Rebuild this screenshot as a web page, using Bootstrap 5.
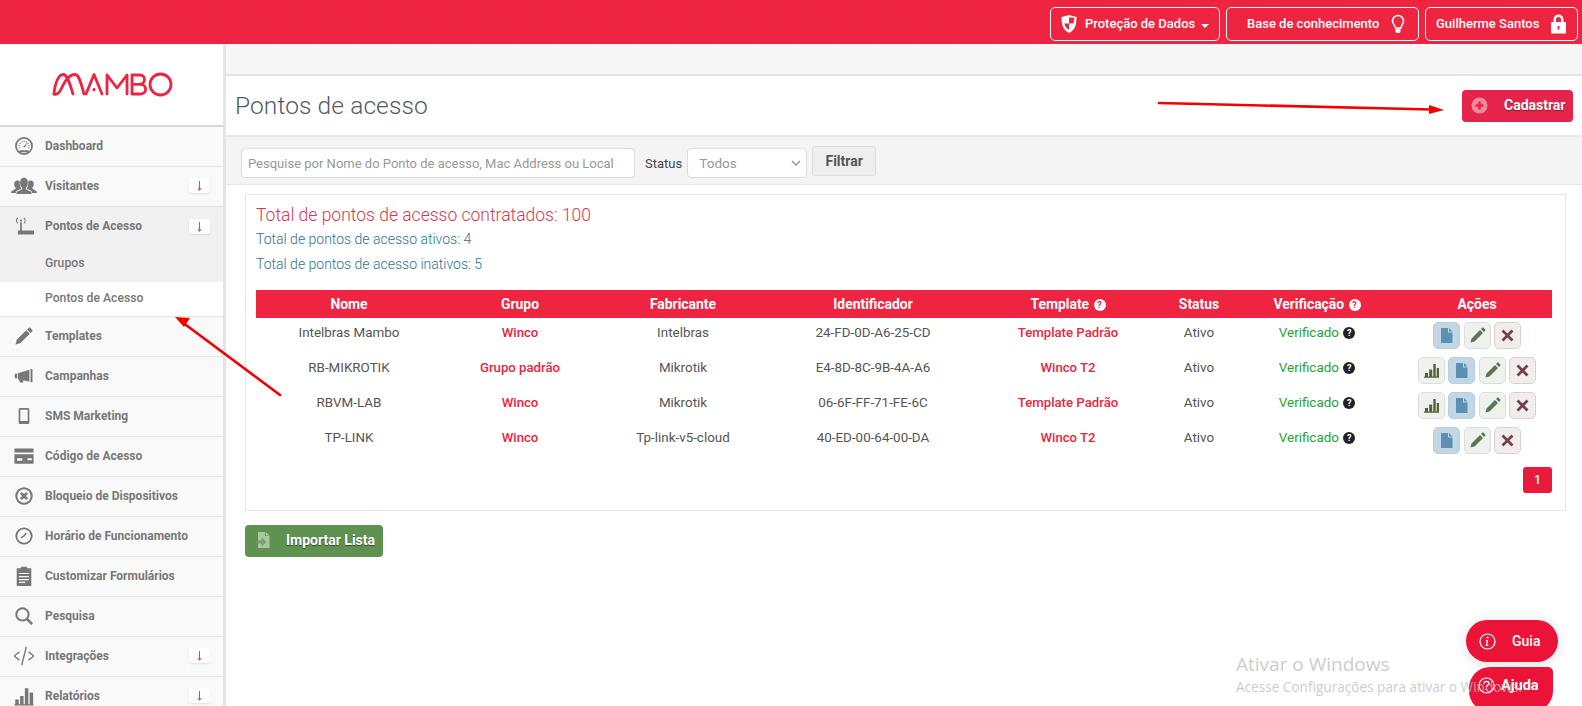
<!DOCTYPE html>
<html lang="pt-BR">
<head>
<meta charset="utf-8">
<title>Pontos de acesso</title>
<link href="https://cdn.jsdelivr.net/npm/bootstrap@5.3.0/dist/css/bootstrap.min.css" rel="stylesheet">
<style>
html,body{height:706px;overflow:hidden}
body{font-family:Roboto,"Liberation Sans",sans-serif;font-size:13px;color:#555;background:#fff;position:relative}
.topbar{height:44px;background-color:#ee2440;background-image:linear-gradient(rgba(0,0,0,.012) 1px,transparent 1px),linear-gradient(90deg,rgba(0,0,0,.012) 1px,transparent 1px);background-size:10px 10px;padding:4px 4px 0 0;gap:6px;justify-content:flex-end}
.topbtn{height:34px;border:1px solid #fff;border-radius:5px;color:#fff;font-weight:500;font-size:13px;display:flex;align-items:center;padding:0;background:transparent}
.topbtn:hover{color:#fff}
.tb1{width:170px;padding-left:10px;gap:8px}
.tb2{width:193px;padding-left:20px;gap:12px}
.tb3{width:153px;padding-left:10px;gap:11px}
.caretdown{width:0;height:0;border:4px solid transparent;border-top-color:#fff;border-bottom:0;margin-left:-2px;margin-top:3px}
.layout{height:662px}
.sidebar{width:226px;flex:none;border-right:3px solid #e4e4e4;background:#fafafa;overflow:hidden}
.logobox{height:83px;background:#fff;border-bottom:2px solid #d8d8d8;padding:21px 0 0 45px}
.logobox svg{display:block}
.menu{border-radius:0}
.menu .list-group-item{height:40px;border:0;border-bottom:1px solid #e3e3e3;border-radius:0;background:#f9f9f9;padding:0 0 2px;display:flex;align-items:center;color:#777;font-weight:700;font-size:12px}
.menu .list-group-item.is-open{background:#f1f1f1;border-bottom:0;padding-bottom:2px}
.menu .list-group-item.subitem{height:35px;background:#f1f1f1;border-bottom:0;padding:0 0 2px 45px;font-weight:500;font-size:12.2px}
.menu .list-group-item.subitem.is-current{background:#fff;border-bottom:1px solid #e3e3e3}
.micon{width:45px;flex:none;display:flex;justify-content:center;padding-left:3px}
.micon svg{width:20px;height:20px}
.micon svg.wide{width:26px;height:26px}
.expander{margin-left:auto;margin-right:13px;width:21px;height:15px;background:#fff;border-radius:3px;box-shadow:0 1px 2px rgba(0,0,0,.1);display:flex;align-items:center;justify-content:center}
.expander svg{width:7px;height:11px;stroke:#f0405f;fill:none}
.mainpane{flex:1;min-width:0}
.stripe{height:32px;background:#f6f6f6;border-bottom:2px solid #e3e3e3}
.titlebar{height:61px;padding:0 9px 0 9px;border-bottom:2px solid #e9e9e9;background:#fff}
.pagetitle{font-size:24.5px;font-weight:300;color:#4f5b66;margin:0;letter-spacing:.1px}
.btn-cad{width:111px;height:32px;margin-top:0;background:#e4244a;border:0;border-radius:4px;color:#fff;font-weight:700;font-size:14px;display:flex;align-items:center;padding:0 0 0 9px;gap:16px;text-shadow:0 1px 1px rgba(0,0,0,.4)}
.btn-cad:hover{color:#fff;background:#e4244a}
.btn-cad svg{width:17px;height:17px}
.filterbar{height:48px;background:#f4f4f4;border-bottom:1px solid #e6e6e6;padding:11px 15px 0;gap:0;align-items:flex-start}
.filterbar .form-control{width:394px;height:30px;font-size:13px;padding:0 6px;border-color:#ddd;border-radius:4px;color:#999}
.filterbar .form-control::placeholder{color:#999}
.statuslbl{margin:6px 5px 0 10px;color:#444;font-size:13px}
.filterbar .form-select{width:120px;height:30px;font-size:13.6px;padding:1px 0 0 11px;border-color:#ddd;color:#999;border-radius:4px;background-image:url("data:image/svg+xml,%3Csvg xmlns='http://www.w3.org/2000/svg' viewBox='0 0 10 6'%3E%3Cpath d='M1 1l4 4 4-4' fill='none' stroke='%23999' stroke-width='1.500'/%3E%3C/svg%3E");background-size:10px 6px;background-position:right 5px center}
.btn-fil{width:64px;height:30px;margin:-2px 0 0 5px;padding:0;background:#eee;border:1px solid #ddd;color:#555;font-weight:700;font-size:14px;border-radius:3px}
.panelbox{margin:9px 16px 0 19px;height:317px;border:1px solid #e6e6e6;padding:9px 9px 10px 10px}
.stat-a{font-size:17.5px;font-weight:300;color:#d6394f;line-height:22px;margin:0 0 1px}
.stat-b{font-size:14px;font-weight:300;color:#2c7396;line-height:25px;margin:0}
.tbl{margin:13px 0 0;table-layout:fixed;width:1296px;--bs-table-bg:transparent;border-collapse:collapse}
.tbl th{height:28px;background:#ee2440;color:#fff;font-weight:700;font-size:13.9px;text-align:center;padding:0;border:0;vertical-align:middle}
.tbl td{height:35px;padding:3px 0 0;border:0;text-align:center;vertical-align:top;color:#555;font-size:13.4px;line-height:23px}
.tbl td.acts{padding:4px 0 0 8px;line-height:1}
.tbl a{color:#ee2440;font-weight:500;text-decoration:none;font-size:13.2px}
.tbl .okay{color:#1fa32f}
.qm{display:inline-block;width:12px;height:12px;border-radius:50%;background:#222;color:#fff;font-size:9px;font-weight:700;line-height:12px;text-align:center;vertical-align:1px;margin-left:1px}
th .qm{background:#fff;color:#ee2440}
.actrow{display:inline-flex;gap:3.5px;justify-content:center;vertical-align:top}
.actbtn{width:27px;height:27px;border-radius:5px;border:1px solid #dcdedc;background:#eff1ef;padding:0;display:flex;align-items:center;justify-content:center}
.actbtn svg{width:17px;height:17px}
.actbtn.bfile{background:#c3d6e3;border-color:#b6cedd}
.actbtn.bdel{background:#f1eded;border-color:#dfcfd2}
.pagewrap{margin:9px 0 0}
.pagewrap .pagination{margin:0;justify-content:flex-end}
.pagewrap .page-link{width:29px;height:26px;padding:0;line-height:26px;text-align:center;background:#e81b3c;border:0;border-radius:3px!important;color:#fff;font-size:12.5px;font-weight:500}
.btn-imp{width:138px;height:32px;margin:14px 0 0 19px;background:#5f9150;border:0;border-radius:4px;color:#fff;font-weight:700;font-size:14px;padding:0 0 2px 11px;display:flex;align-items:center;gap:15px;text-shadow:0 1px 1px rgba(0,0,0,.5)}
.btn-imp:hover{color:#fff;background:#5f9150}
.btn-imp svg{width:15px;height:18px}
.arrowlayer{position:absolute;left:0;top:0;pointer-events:none}
.watermark{position:absolute;left:1236px;top:651px;color:rgba(190,190,190,.8);font-family:"Open Sans",sans-serif;pointer-events:none}
.wm1{font-size:19px;line-height:26px}
.wm2{font-size:13.6px;line-height:20px;white-space:nowrap}
.floatbtn{position:absolute;background:#eb1337;color:#fff;font-weight:500;border:0;display:flex;align-items:center;padding:0}
.floatbtn svg{width:17px;height:17px}
.fguia{left:1466px;top:620px;width:92px;height:42px;border-radius:21px;box-shadow:0 2px 14px rgba(0,0,0,.14);padding-left:13px;gap:16px;font-size:14px}
.fajuda{left:1469px;top:667px;width:84px;height:45px;border-radius:21px 5px 21px 21px;padding:0 0 8px 9px;gap:6px;font-size:14.5px;font-weight:700}
</style>
</head>
<body>
<svg width="0" height="0" class="position-absolute">
<defs>
<symbol id="i-gauge" viewBox="0 0 26 26"><circle cx="13" cy="13" r="10.500" fill="none" stroke="#777" stroke-width="2.200"/><path d="M7 16a6.500 6.500 0 1 1 12 0" fill="none" stroke="#777" stroke-width="1.400" stroke-dasharray="1.500 1.500"/><path d="M12 14l6-6-4 7zM7 18.500h12v2.500H7z" fill="#777"/></symbol>
<symbol id="i-users" viewBox="-1 -1 28 28"><path d="M13 4c3.200 0 4.200 2.500 4.200 5.500s-1 4.500-2.200 5.500v1.500l5 2.300c1 .5 1.200 1.700 1.200 2.700H4.800c0-1 .2-2.200 1.200-2.700l5-2.300V15c-1.200-1-2.200-2.500-2.200-5.500S9.800 4 13 4z" fill="#777"/><path d="M6 7c1.500 0 2 .6 2.500 1.400-.4 3 .3 5.400 1.500 7v.6l-4.500 2.100c-.8.500-1.300 1.500-1.300 2.400H-1c0-1 .3-2 1.200-2.500l3.800-2v-1.300C3 13.700 2.400 12.500 2.400 11 2.400 8.500 3.500 7 6 7zM20 7c-1.500 0-2 .6-2.500 1.400.4 3-.3 5.400-1.500 7v.6l4.500 2.100c.8.500 1.300 1.500 1.300 2.400H27c0-1-.3-2-1.200-2.500l-3.800-2v-1.300c1-.8 1.600-2 1.600-3.500C23.600 8.500 22.500 7 20 7z" fill="#777"/></symbol>
<symbol id="i-router" viewBox="0 0 26 26"><path d="M5 19h21v5H5zM8 8h2.200v12H8z" fill="#777"/><circle cx="9" cy="6" r="1.400" fill="#777"/><path d="M5 2.500c-2 2-2 5 0 7M13 2.500c2 2 2 5 0 7" fill="none" stroke="#777" stroke-width="1.400"/></symbol>
<symbol id="i-pencil" viewBox="0 0 26 26"><path d="M2 24l1.500-6L16 5.500 20.500 10 8 22.500zM17 4.500l2-2c.7-.7 1.500-.7 2.200 0l2.300 2.300c.7.700.7 1.500 0 2.200l-2 2z" fill="#777"/></symbol>
<symbol id="i-horn" viewBox="0 0 26 26"><path d="M1 10h3v6H1zM5 9.500L20 5v15.500L12 18.500v3H7.500l-1-4H5z" fill="#777"/><path d="M21.500 4h2.500v17h-2.500z" fill="#777"/></symbol>
<symbol id="i-phone" viewBox="0 0 26 26"><path fill-rule="evenodd" d="M8.500 2.500h9c1.500 0 2.500.8 2.500 2.200v16.600c0 1.400-1 2.200-2.500 2.200h-9c-1.500 0-2.500-.8-2.500-2.200V4.700c0-1.400 1-2.200 2.500-2.200zm-.3 2.500v14.500h9.600V5z" fill="#777"/></symbol>
<symbol id="i-card" viewBox="1.500 1.500 23 23"><path fill-rule="evenodd" d="M2 4.500h22V9H2zM2 11h22v11H2zm3 4.500v3h6v-3zm12 0V18h5v-2.500z" fill="#777"/></symbol>
<symbol id="i-xcirc" viewBox="0 0 26 26"><circle cx="13" cy="13" r="10" fill="none" stroke="#777" stroke-width="2.600"/><path d="M9 9l8 8M17 9l-8 8" stroke="#777" stroke-width="3.400"/></symbol>
<symbol id="i-clock" viewBox="0 0 26 26"><circle cx="13" cy="13" r="10" fill="none" stroke="#777" stroke-width="2.400"/><path d="M9 15.500l4-2.500 3-4" fill="none" stroke="#777" stroke-width="2"/></symbol>
<symbol id="i-clip" viewBox="0 0 26 26"><path fill-rule="evenodd" d="M4.500 3H9V1h8v2h4.500c.7 0 1 .3 1 1v21c0 .7-.3 1-1 1h-17c-.7 0-1-.3-1-1V4c0-.7.3-1 1-1zm2 6v1.500h13V9zm0 4v1.500h13V13zm0 4v1.500h13V17zm0 3.500V22h8v-1.500z" fill="#777"/></symbol>
<symbol id="i-search" viewBox="0 0 26 26"><circle cx="11" cy="11" r="8" fill="none" stroke="#777" stroke-width="2.600"/><path d="M16.500 16.500l7 7" stroke="#777" stroke-width="3.400"/></symbol>
<symbol id="i-code" viewBox="2 2 22 22"><path d="M8 8.500l-6 4.500 6 4.500M18 8.500l6 4.500-6 4.500M15.500 3l-5 20" fill="none" stroke="#777" stroke-width="1.500"/></symbol>
<symbol id="i-bars" viewBox="1.500 1.500 23 23"><path d="M2 22.500h22V24H2zM3 17h4v5.500H3zM8.500 13h4v9.500h-4zM14 4h4v18.500h-4zM19.500 9h4v13.500h-4z" fill="#777"/></symbol>
<symbol id="a-chart" viewBox="0 0 17 17"><path d="M1 14.500h15v1.200H1zM2 11h3v3.500H2zM6.200 7.500h3v7h-3zM10.300 2h2.400v12.500h-2.400zM13.700 6h2.300v8.500h-2.300z" fill="#54613f"/></symbol>
<symbol id="a-file" viewBox="0 0 17 17"><path d="M3 1h7v4.500h4.500V16H3zM11 1l3.500 3.500H11z" fill="#5b90b5"/></symbol>
<symbol id="a-pen" viewBox="0 0 17 17"><path d="M1.500 15.500l1-4L11 3l3 3-8.500 8.500zM12 2l1.200-1.200c.4-.4 1-.4 1.400 0l1.600 1.600c.4.400.4 1 0 1.400L15 5z" fill="#5c7553"/></symbol>
<symbol id="a-del" viewBox="0 0 17 17"><path d="M3.500 3.500l10 10M13.500 3.500l-10 10" stroke="#74404a" stroke-width="2.800"/></symbol>
<symbol id="dn" viewBox="0 0 7 11"><path d="M3.500 1v8.500M2 8l1.500 2.500L5 8" stroke-width="1"/></symbol>
</defs>
</svg>

<nav class="navbar topbar d-flex flex-nowrap">
  <a class="btn topbtn tb1" href="#"><svg width="16" height="20" viewBox="0 0 16 19"><path d="M8 .5l7.500 2c0 8-1.500 13-7.500 16C2 15.500.5 10.500.5 2.500z" fill="#fff"/><path d="M8 3h5.200c0 2.200-.2 4.200-.7 6H8zM8 9v6.500C5.500 14 4 12 3.300 9z" fill="#ee2440"/></svg><span>Proteção de Dados</span><span class="caretdown"></span></a>
  <a class="btn topbtn tb2" href="#"><span>Base de conhecimento</span><svg width="14" height="20" viewBox="0 0 14 20"><path d="M7 1.500a5.500 5.500 0 0 1 5.500 5.500c0 2.500-2 4-2.500 7H4.500C4 11 1.500 9.500 1.500 7A5.500 5.500 0 0 1 7 1.500z" fill="none" stroke="#fff" stroke-width="1.500"/><path d="M4.500 15h5v3l-1 1h-3l-1-1z" fill="#fff"/></svg></a>
  <a class="btn topbtn tb3" href="#"><span>Guilherme Santos</span><svg width="17" height="20" viewBox="0 0 17 20"><path fill-rule="evenodd" d="M3.500 8V5.500a5 5 0 0 1 10 0V8H16v11.500H1V8zm2.500 0h5V5.500a2.500 2.500 0 0 0-5 0zM7.500 12v3.500h2V12z" fill="#fff"/></svg></a>
</nav>

<div class="d-flex layout">
  <aside class="sidebar">
    <div class="logobox">
      <svg width="135" height="40" viewBox="0 0 135 40" class="brandmark"><g fill="none" stroke="#ee2440" stroke-width="2.800" stroke-linecap="round" stroke-linejoin="round"><path d="M9 29C10 17 14 9.500 18 9.500c5 0 7 10.500 10 19.500"/><path d="M9 29c2 1 4 0 6-3 3-5 7-16.500 15-16.500 4 0 6 8 9 19.500"/><path d="M41 29l8-19.500 8 19.500"/><path d="M49 24.500v.5"/><path d="M62 29V10l10 13 10-13v19"/><path d="M87 10h8c6 0 6 9 0 9.300 7.500 0 7.500 9.700 0 9.700h-8zM87 19.300h8"/><circle cx="115.500" cy="19.500" r="10.500"/></g></svg>
    </div>
    <div class="list-group menu">
      <a class="list-group-item" href="#"><span class="micon"><svg><use href="#i-gauge"/></svg></span>Dashboard</a>
      <a class="list-group-item" href="#"><span class="micon"><svg class="wide"><use href="#i-users"/></svg></span>Visitantes<span class="expander"><svg><use href="#dn"/></svg></span></a>
      <a class="list-group-item is-open" href="#"><span class="micon"><svg><use href="#i-router"/></svg></span>Pontos de Acesso<span class="expander"><svg><use href="#dn"/></svg></span></a>
      <a class="list-group-item subitem" href="#">Grupos</a>
      <a class="list-group-item subitem is-current" href="#">Pontos de Acesso</a>
      <a class="list-group-item" href="#"><span class="micon"><svg><use href="#i-pencil"/></svg></span>Templates</a>
      <a class="list-group-item" href="#"><span class="micon"><svg><use href="#i-horn"/></svg></span>Campanhas</a>
      <a class="list-group-item" href="#"><span class="micon"><svg><use href="#i-phone"/></svg></span>SMS Marketing</a>
      <a class="list-group-item" href="#"><span class="micon"><svg><use href="#i-card"/></svg></span>Código de Acesso</a>
      <a class="list-group-item" href="#"><span class="micon"><svg><use href="#i-xcirc"/></svg></span>Bloqueio de Dispositivos</a>
      <a class="list-group-item" href="#"><span class="micon"><svg><use href="#i-clock"/></svg></span>Horário de Funcionamento</a>
      <a class="list-group-item" href="#"><span class="micon"><svg><use href="#i-clip"/></svg></span>Customizar Formulários</a>
      <a class="list-group-item" href="#"><span class="micon"><svg><use href="#i-search"/></svg></span>Pesquisa</a>
      <a class="list-group-item" href="#"><span class="micon"><svg><use href="#i-code"/></svg></span>Integrações<span class="expander"><svg><use href="#dn"/></svg></span></a>
      <a class="list-group-item" href="#"><span class="micon"><svg><use href="#i-bars"/></svg></span>Relatórios<span class="expander"><svg><use href="#dn"/></svg></span></a>
    </div>
  </aside>

  <main class="mainpane">
    <div class="stripe"></div>
    <div class="titlebar d-flex align-items-center justify-content-between">
      <h1 class="pagetitle">Pontos de acesso</h1>
      <a class="btn btn-cad" href="#"><svg viewBox="0 0 17 17"><circle cx="8.500" cy="8.500" r="8" fill="#f28a9e"/><path d="M8.500 4.500v8M4.500 8.500h8" stroke="#e4244a" stroke-width="2.600"/></svg><span>Cadastrar</span></a>
    </div>
    <form class="filterbar d-flex">
      <input class="form-control" type="text" placeholder="Pesquise por Nome do Ponto de acesso, Mac Address ou Local">
      <span class="statuslbl">Status</span>
      <select class="form-select"><option>Todos</option></select>
      <button class="btn btn-fil" type="button">Filtrar</button>
    </form>
    <section class="panelbox">
      <p class="stat-a">Total de pontos de acesso contratados: 100</p>
      <p class="stat-b">Total de pontos de acesso ativos: 4</p>
      <p class="stat-b">Total de pontos de acesso inativos: 5</p>
      <table class="table tbl">
        <colgroup><col style="width:186px"><col style="width:156px"><col style="width:170px"><col style="width:210px"><col style="width:180px"><col style="width:82px"><col style="width:154px"><col style="width:158px"></colgroup>
        <thead><tr><th>Nome</th><th>Grupo</th><th>Fabricante</th><th>Identificador</th><th>Template <span class="qm">?</span></th><th>Status</th><th>Verificação <span class="qm">?</span></th><th style="padding-left:8px">Ações</th></tr></thead>
        <tbody>
          <tr><td>Intelbras Mambo</td><td><a href="#">Winco</a></td><td>Intelbras</td><td>24-FD-0D-A6-25-CD</td><td><a href="#">Template Padrão</a></td><td>Ativo</td><td><span class="okay">Verificado</span> <span class="qm">?</span></td>
            <td class="acts"><div class="actrow"><button class="actbtn bfile"><svg><use href="#a-file"/></svg></button><button class="actbtn"><svg><use href="#a-pen"/></svg></button><button class="actbtn bdel"><svg><use href="#a-del"/></svg></button></div></td></tr>
          <tr><td>RB-MIKROTIK</td><td><a href="#">Grupo padrão</a></td><td>Mikrotik</td><td>E4-8D-8C-9B-4A-A6</td><td><a href="#">Winco T2</a></td><td>Ativo</td><td><span class="okay">Verificado</span> <span class="qm">?</span></td>
            <td class="acts"><div class="actrow"><button class="actbtn"><svg><use href="#a-chart"/></svg></button><button class="actbtn bfile"><svg><use href="#a-file"/></svg></button><button class="actbtn"><svg><use href="#a-pen"/></svg></button><button class="actbtn bdel"><svg><use href="#a-del"/></svg></button></div></td></tr>
          <tr><td>RBVM-LAB</td><td><a href="#">Winco</a></td><td>Mikrotik</td><td>06-6F-FF-71-FE-6C</td><td><a href="#">Template Padrão</a></td><td>Ativo</td><td><span class="okay">Verificado</span> <span class="qm">?</span></td>
            <td class="acts"><div class="actrow"><button class="actbtn"><svg><use href="#a-chart"/></svg></button><button class="actbtn bfile"><svg><use href="#a-file"/></svg></button><button class="actbtn"><svg><use href="#a-pen"/></svg></button><button class="actbtn bdel"><svg><use href="#a-del"/></svg></button></div></td></tr>
          <tr><td>TP-LINK</td><td><a href="#">Winco</a></td><td>Tp-link-v5-cloud</td><td>40-ED-00-64-00-DA</td><td><a href="#">Winco T2</a></td><td>Ativo</td><td><span class="okay">Verificado</span> <span class="qm">?</span></td>
            <td class="acts"><div class="actrow"><button class="actbtn bfile"><svg><use href="#a-file"/></svg></button><button class="actbtn"><svg><use href="#a-pen"/></svg></button><button class="actbtn bdel"><svg><use href="#a-del"/></svg></button></div></td></tr>
        </tbody>
      </table>
      <nav class="pagewrap" style="width:1296px"><ul class="pagination"><li class="page-item"><a class="page-link" href="#">1</a></li></ul></nav>
    </section>
    <a class="btn btn-imp" href="#"><svg viewBox="0 0 15 18"><path d="M2 1h7v4h4.500v12H2z" fill="#a9c79f"/><path d="M9.800 1l3.700 3.400H9.800z" fill="#a9c79f"/><path d="M0 10h6V7.500l4 3.500-4 3.500V12H0z" fill="#7ea873" stroke="#5f9150" stroke-width=".6"/></svg><span>Importar Lista</span></a>
  </main>
</div>

<svg class="arrowlayer" width="1582" height="706" viewBox="0 0 1582 706">
  <path d="M1159 103L1432 109.500" stroke="#f40000" stroke-width="2.600" stroke-linecap="round" fill="none"/>
  <path d="M1444 110l-15-5v9z" fill="#f40000"/>
  <path d="M280 395L182 322" stroke="#f40000" stroke-width="2.600" stroke-linecap="round" fill="none"/>
  <path d="M175 317l15 1-6 9z" fill="#f40000"/>
</svg>

<button class="floatbtn fguia" type="button"><svg viewBox="0 0 17 17"><circle cx="8.500" cy="8.500" r="7.500" fill="none" stroke="#fff" stroke-width="1.200"/><path d="M9.500 3.700v1.800H7.800V3.700zM9.200 7l-1 5h1.200l-.1.900H6.700l1-5H6.900l.1-.9z" fill="#fff"/></svg><span>Guia</span></button>
<button class="floatbtn fajuda" type="button"><svg viewBox="0 0 17 17"><circle cx="8.500" cy="8.500" r="7.500" fill="none" stroke="#fff" stroke-width="1.200"/><path d="M6 6.500C6 5 7 4.300 8.500 4.300S11 5.200 11 6.500 9 8 8.600 10" fill="none" stroke="#fff" stroke-width="1.300"/><circle cx="8.500" cy="12.300" r=".9" fill="#fff"/></svg><span>Ajuda</span></button>

<div class="watermark"><div class="wm1">Ativar o Windows</div><div class="wm2">Acesse Configurações para ativar o Windows.</div></div>

<script src="https://cdn.jsdelivr.net/npm/bootstrap@5.3.0/dist/js/bootstrap.bundle.min.js"></script>
</body>
</html>
